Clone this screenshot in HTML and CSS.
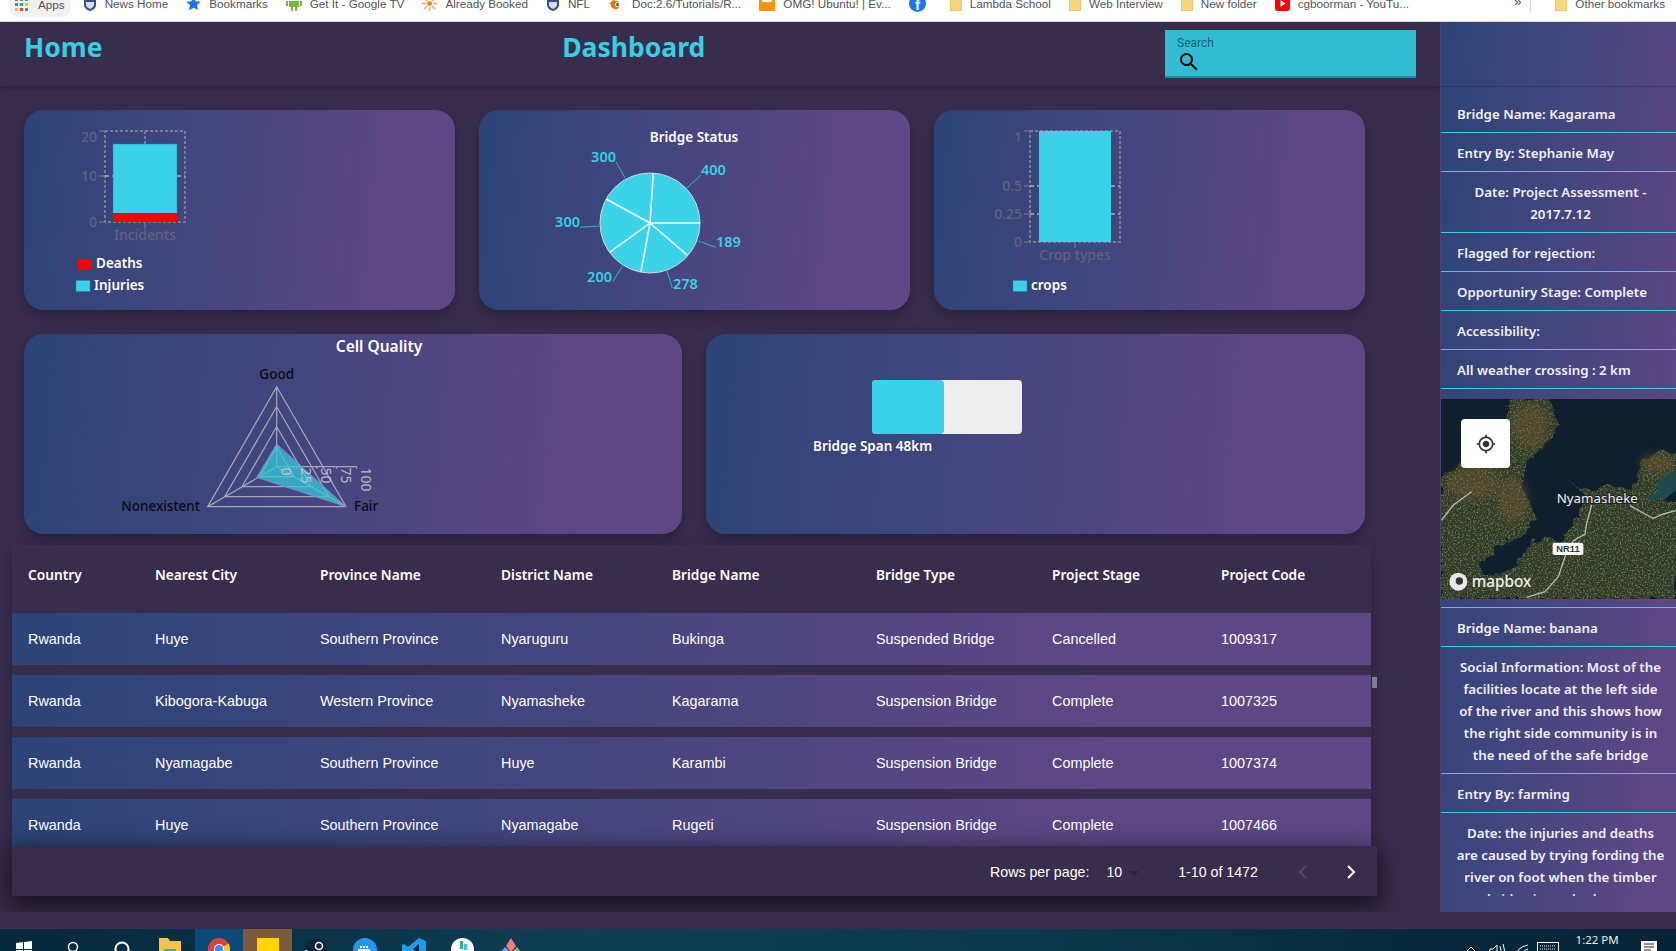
FILE: index.html
```html
<!DOCTYPE html>
<html lang="en">

<head>
  <meta charset="UTF-8">
  <meta name="viewport" content="width=device-width, initial-scale=1.0">
  <title>Dashboard</title>
  <link rel="stylesheet" href="styles.css">
</head>

<body>
  <svg class="defs" width="0" height="0">
    <symbol id="folder" viewBox="0 0 12 16">
      <path d="M0 0h7l5 3v13H0z" fill="#f6d77e" stroke="#e2b94f" stroke-width=".8" />
    </symbol>
    <symbol id="nfl" viewBox="0 0 14 16">
      <path d="M1 1h12v9q0 4-6 6-6-2-6-6z" fill="#3a4f86" />
      <path d="M3 7h8v3q0 2-4 4-4-2-4-4z" fill="#d9dde8" />
      <path d="M3 3h8v2H3z" fill="#e9e9ef" />
    </symbol>
  </svg>

  <nav class="bookmarks">
    <a class="bm apps">
      <svg width="13" height="13" viewBox="0 0 13 13">
        <rect width="3" height="3" fill="#ea4335" /><rect x="5" width="3" height="3" fill="#4285f4" /><rect x="10" width="3" height="3" fill="#34a853" />
        <rect y="5" width="3" height="3" fill="#4285f4" /><rect x="5" y="5" width="3" height="3" fill="#34a853" /><rect x="10" y="5" width="3" height="3" fill="#fbbc05" />
        <rect y="10" width="3" height="3" fill="#fbbc05" /><rect x="5" y="10" width="3" height="3" fill="#ea4335" /><rect x="10" y="10" width="3" height="3" fill="#4285f4" />
      </svg>
      Apps
    </a>
    <a class="bm"><svg width="14" height="16"><use href="#nfl" /></svg>News Home</a>
    <a class="bm"><svg width="15" height="15" viewBox="0 0 24 24"><path d="M12 1l3.4 7.4 8 .9-6 5.4 1.7 7.9L12 18.6 4.900 22.600l1.700-7.900-6-5.400 8-.9z" fill="#1a73e8" /></svg>Bookmarks</a>
    <a class="bm"><svg width="16" height="16" viewBox="0 0 16 16"><path d="M3 1h10v4H3zM3 6h10v6H3zM0 6h2v5H0zM14 6h2v5h-2zM5 12h2v4H5zM9 12h2v4H9z" fill="#7cb342" /></svg>Get It - Google TV</a>
    <a class="bm"><svg width="15" height="15" viewBox="0 0 15 15"><circle cx="7.500" cy="7.500" r="2.500" fill="#f08a24" /><path d="M7.500 0v4M7.500 11v4M0 7.500h4M11 7.500h4M2 2l3 3M10 10l3 3M13 2l-3 3M5 10l-3 3" stroke="#f7a85c" stroke-width="1.500" /></svg>Already Booked</a>
    <a class="bm"><svg width="14" height="16"><use href="#nfl" /></svg>NFL</a>
    <a class="bm"><svg width="16" height="14" viewBox="0 0 16 14"><path d="M1 8l6-6h3L6 5h4a4.500 4.500 0 1 1-7 3z" fill="#ea7600" /><circle cx="9.500" cy="8.500" r="2.500" fill="#fff" /><circle cx="9.500" cy="8.500" r="1.500" fill="#265787" /></svg>Doc:2.6/Tutorials/R...</a>
    <a class="bm"><svg width="16" height="16" viewBox="0 0 16 16"><rect width="16" height="16" fill="#f89406" /><rect x="3" y="3" width="10" height="4" fill="#fff" /></svg>OMG! Ubuntu! | Ev...</a>
    <a class="bm icon-only"><svg width="17" height="17" viewBox="0 0 17 17"><circle cx="8.500" cy="8.500" r="8.500" fill="#1877f2" /><text x="6" y="15" class="fb">f</text></svg></a>
    <a class="bm"><svg width="12" height="16"><use href="#folder" /></svg>Lambda School</a>
    <a class="bm"><svg width="12" height="16"><use href="#folder" /></svg>Web Interview</a>
    <a class="bm"><svg width="12" height="16"><use href="#folder" /></svg>New folder</a>
    <a class="bm"><svg width="15" height="15" viewBox="0 0 15 15"><rect width="15" height="15" rx="3" fill="#f00" /><path d="M5.500 4l5 3.500-5 3.500z" fill="#fff" /></svg>cgboorman - YouTu...</a>
    <span class="more">»</span>
    <a class="bm other"><svg width="12" height="16"><use href="#folder" /></svg>Other bookmarks</a>
  </nav>

  <div class="main">
    <div class="content">
      <header class="header">
        <h1>Home</h1>
        <h1>Dashboard</h1>
        <div class="search">
          <label>Search</label>
          <svg width="24" height="24" viewBox="0 0 24 24"><path d="M15.500 14h-.79l-.28-.27A6.470 6.470 0 0 0 16 9.500 6.500 6.500 0 1 0 9.500 16c1.610 0 3.090-.59 4.230-1.570l.27.28v.79l5 4.990L20.490 19l-4.990-5zm-6 0C7.010 14 5 11.990 5 9.500S7.010 5 9.500 5 14 7.010 14 9.500 11.990 14 9.500 14z" /></svg>
        </div>
      </header>

      <div class="charts">
        <div class="row">
          <section class="card">
            <svg class="chart" viewBox="24 110 431 200">
              <path class="frame" d="M105 131H185V222H105ZM145 131V144" />
              <path class="tick" d="M99 131h6M99 176h6M99 222h6M145 222v6" />
              <path class="grid" d="M105 176h8M177 176h8" />
              <rect class="bar" x="113" y="144" width="64" height="70" />
              <rect x="113" y="213" width="64" height="9" fill="#f00" />
              <text class="axis end" x="97" y="142">20</text>
              <text class="axis end" x="97" y="181">10</text>
              <text class="axis end" x="97" y="227">0</text>
              <text class="axis mid" x="145" y="240">Incidents</text>
              <rect x="78" y="259" width="14" height="10.500" fill="#f00" />
              <text class="legend" x="96" y="268">Deaths</text>
              <rect class="bar" x="76" y="280.500" width="14" height="11" />
              <text class="legend" x="94" y="290">Injuries</text>
            </svg>
          </section>

          <section class="card">
            <svg class="chart" viewBox="479 110 431 200">
              <text class="title mid" x="694" y="142">Bridge Status</text>
              <circle cx="650" cy="223" r="50" class="pie" />
              <path class="slice" d="M650 223L700 223M650 223L653.300 173.300M650 223L606 199M650 223L610 252M650 223L641 272M650 223L687.300 255.300" />
              <path class="leader" d="M686.700 188.300L701 175M625.300 178.300L616 161.700M599.300 226L580 227.300M622.700 265.700L612.700 281.700M666.700 270L672.300 288M697.700 240.700L715.700 247.300" />
              <text class="value" x="701" y="175">400</text>
              <text class="value end" x="616" y="162">300</text>
              <text class="value end" x="580" y="227">300</text>
              <text class="value end" x="612" y="282">200</text>
              <text class="value" x="673" y="289">278</text>
              <text class="value" x="716" y="247">189</text>
            </svg>
          </section>

          <section class="card">
            <svg class="chart" viewBox="934 110 431 200">
              <path class="frame" d="M1030 131H1120V242H1030Z" />
              <path class="tick" d="M1024 131h6M1024 186h6M1024 214h6M1024 242h6M1075 242v6" />
              <path class="grid" d="M1030 186h9M1111 186h9M1030 214h9M1111 214h9" />
              <rect class="bar plain" x="1039" y="131" width="72" height="111" />
              <text class="axis end" x="1022" y="142">1</text>
              <text class="axis end" x="1022" y="191">0.5</text>
              <text class="axis end" x="1022" y="219">0.25</text>
              <text class="axis end" x="1022" y="247">0</text>
              <text class="axis mid" x="1075" y="260">Crop types</text>
              <rect class="bar" x="1013" y="280.500" width="14" height="11" />
              <text class="legend" x="1031" y="290">crops</text>
            </svg>
          </section>
        </div>

        <div class="row">
          <section class="card radar-card">
            <svg class="chart" viewBox="24 334 658 200">
              <text class="title big mid" x="379" y="352">Cell Quality</text>
              <path class="web" d="M276.700 386.700L346 506.700H207.700ZM276.700 406.700L329 496.700H224.700ZM276.700 426.700L311.400 486.700H242ZM276.700 446.700L294 476.700H259.400ZM276.700 386.700V466.700M276.700 466.700L346 506.700M276.700 466.700L207.700 506.700" />
              <path class="web" d="M276.700 466.700H356.700M296.700 466.700v2M316.700 466.700v2M336.700 466.700v2M356.700 466.700v2" />
              <polygon class="radar" points="276.700,444 346,506.700 256.700,477.300" />
              <text class="tick-label" transform="translate(277 467.500) rotate(90)" y="-4">0</text>
              <text class="tick-label" transform="translate(297 467.500) rotate(90)" y="-4">25</text>
              <text class="tick-label" transform="translate(317 467.500) rotate(90)" y="-4">50</text>
              <text class="tick-label" transform="translate(337 467.500) rotate(90)" y="-4">75</text>
              <text class="tick-label" transform="translate(357 467.500) rotate(90)" y="-4">100</text>
              <text class="corner mid" x="276.700" y="379">Good</text>
              <text class="corner end" x="200" y="511">Nonexistent</text>
              <text class="corner" x="354" y="511">Fair</text>
            </svg>
          </section>

          <section class="card span-card">
            <div class="span-bar">
              <div class="span-fill"></div>
            </div>
            <p class="span-label">Bridge Span 48km</p>
          </section>
        </div>
      </div>

      <div class="table-box">
        <div class="table-scroll">
          <table>
            <thead>
              <tr>
                <th class="c1">Country</th>
                <th class="c2">Nearest City</th>
                <th class="c3">Province Name</th>
                <th class="c4">District Name</th>
                <th class="c5">Bridge Name</th>
                <th class="c6">Bridge Type</th>
                <th class="c7">Project Stage</th>
                <th>Project Code</th>
              </tr>
            </thead>
            <tbody>
              <tr>
                <td>Rwanda</td><td>Huye</td><td>Southern Province</td><td>Nyaruguru</td><td>Bukinga</td><td>Suspended Bridge</td><td>Cancelled</td><td>1009317</td>
              </tr>
              <tr>
                <td>Rwanda</td><td>Kibogora-Kabuga</td><td>Western Province</td><td>Nyamasheke</td><td>Kagarama</td><td>Suspension Bridge</td><td>Complete</td><td>1007325</td>
              </tr>
              <tr>
                <td>Rwanda</td><td>Nyamagabe</td><td>Southern Province</td><td>Huye</td><td>Karambi</td><td>Suspension Bridge</td><td>Complete</td><td>1007374</td>
              </tr>
              <tr>
                <td>Rwanda</td><td>Huye</td><td>Southern Province</td><td>Nyamagabe</td><td>Rugeti</td><td>Suspension Bridge</td><td>Complete</td><td>1007466</td>
              </tr>
            </tbody>
          </table>
        </div>
        <span class="scroll-thumb"></span>
        <div class="pagination">
          <span>Rows per page:</span>
          <span class="per-page">10</span>
          <span class="caret"></span>
          <span class="range">1-10 of 1472</span>
          <svg class="prev" width="10" height="14" viewBox="0 0 10 14"><path d="M8 1L2 7l6 6" /></svg>
          <svg class="next" width="10" height="14" viewBox="0 0 10 14"><path d="M2 1l6 6-6 6" /></svg>
        </div>
      </div>
    </div>

    <aside class="sidebar">
      <div class="sidebar-top"></div>
      <div class="sidebar-list">
        <div class="info">Bridge Name: Kagarama</div>
        <div class="info">Entry By: Stephanie May</div>
        <div class="info center">Date: Project Assessment - 2017.7.12</div>
        <div class="info">Flagged for rejection:</div>
        <div class="info">Opportuniry Stage: Complete</div>
        <div class="info">Accessibility:</div>
        <div class="info">All weather crossing : 2 km</div>
        <div class="map-item">
          <svg class="map" viewBox="33 27 705 600" preserveAspectRatio="none">
            <defs>
              <filter id="rough" x="-5%" y="-5%" width="110%" height="110%">
                <feTurbulence type="fractalNoise" baseFrequency=".035" numOctaves="4" seed="4" result="warp" />
                <feDisplacementMap in="SourceGraphic" in2="warp" scale="26" result="shape" />
                <feTurbulence type="fractalNoise" baseFrequency=".2" numOctaves="3" seed="9" />
                <feColorMatrix values="0 0 0 0 .3  0 0 0 0 .3  0 0 0 0 .17  1.800 0 0 0 -.9" result="grain" />
                <feComposite in="grain" in2="shape" operator="in" result="speck" />
                <feMerge>
                  <feMergeNode in="shape" />
                  <feMergeNode in="speck" />
                </feMerge>
              </filter>
              <filter id="soft"><feGaussianBlur stdDeviation="12" /></filter>
            </defs>
            <rect x="33" y="27" width="705" height="600" fill="#0f1f2d" />
            <path d="M640 300L738 210V300L660 365Z" fill="#1d4a50" />
            <g filter="url(#rough)">
              <path class="land" d="M33 260L70 235L110 215L190 170L230 80L235 27H360L385 100L370 135L290 220L275 290L300 340L318 380L290 430L200 470L150 520L165 560L240 540L300 470L340 435L390 460L440 380L470 320L405 260L440 290L490 300L540 285L600 300L640 215L690 180L738 190V240L690 270L660 330L738 330V627H33Z" />
            </g>
            <g filter="url(#soft)" class="patches">
              <ellipse cx="300" cy="110" rx="55" ry="70" />
              <ellipse cx="130" cy="280" rx="80" ry="50" />
              <ellipse cx="250" cy="330" rx="45" ry="70" />
              <ellipse cx="680" cy="220" rx="50" ry="30" />
            </g>
            <path class="road" d="M485 345L470 400L465 432L430 452L405 500L385 560L345 605L290 622M600 347L650 375L670 385L700 372L738 362M35 390L70 345L125 305" />
            <text class="place" x="380" y="340">Nyamasheke</text>
            <rect x="368" y="458" width="92" height="37" rx="6" fill="#fff" />
            <text class="shield" x="414" y="485">NR11</text>
            <circle cx="85" cy="575" r="27" fill="#e8e8e8" />
            <circle cx="88" cy="573" r="11" fill="#333" />
            <text class="wordmark" x="125" y="590">mapbox</text>
          </svg>
          <button class="locate">
            <svg width="20" height="20" viewBox="0 0 24 24"><path d="M12 8c-2.210 0-4 1.790-4 4s1.790 4 4 4 4-1.790 4-4-1.790-4-4-4zm8.940 3c-.46-4.170-3.770-7.480-7.940-7.940V1h-2v2.060C6.830 3.520 3.520 6.830 3.060 11H1v2h2.060c.46 4.170 3.770 7.480 7.940 7.940V23h2v-2.060c4.170-.46 7.480-3.770 7.940-7.940H23v-2h-2.060zM12 19c-3.870 0-7-3.130-7-7s3.130-7 7-7 7 3.130 7 7-3.130 7-7 7z" /></svg>
          </button>
        </div>
        <div class="info">Bridge Name: banana</div>
        <div class="info center">Social Information: Most of the facilities locate at the left side of the river and this shows how the right side community is in the need of the safe bridge</div>
        <div class="info">Entry By: farming</div>
        <div class="info center">Date: the injuries and deaths are caused by trying fording the river on foot when the timber bridge is washed away</div>
      </div>
    </aside>
  </div>

  <footer class="taskbar">
    <div class="slot"><svg width="16" height="16" viewBox="0 0 16 16"><path d="M0 2l7-1v7H0zM8 1l8-1v8H8zM0 9h7v6l-7-1zM8 9h8v7l-8-1z" fill="#fff" /></svg></div>
    <div class="slot"><svg width="12" height="16" viewBox="0 0 12 16"><circle cx="6" cy="6" r="4.500" fill="none" stroke="#fff" stroke-width="1.500" /></svg></div>
    <div class="slot"><svg width="16" height="16" viewBox="0 0 16 16"><circle cx="8" cy="8" r="6.500" fill="none" stroke="#fff" stroke-width="2" /></svg></div>
    <div class="slot"><svg width="22" height="20" viewBox="0 0 22 20"><path d="M0 0h9l2 3h11v17H0z" fill="#f4c542" /><rect x="5" y="11" width="12" height="4" fill="#3ba0e6" /></svg></div>
    <div class="slot tile-blue"><svg width="22" height="22" viewBox="0 0 22 22"><circle cx="11" cy="11" r="11" fill="#db4437" /><path d="M11 11L1.500 16.500A11 11 0 0 0 11 22z" fill="#0f9d58" /><path d="M11 11V22A11 11 0 0 0 20.500 5.500z" fill="#fbc02d" /><circle cx="11" cy="11" r="5" fill="#fff" /><circle cx="11" cy="11" r="4" fill="#4285f4" /></svg></div>
    <div class="slot tile-brown"><svg width="22" height="22" viewBox="0 0 22 22"><rect width="22" height="22" fill="#ffd400" /><rect x="10" y="17" width="12" height="5" fill="#3d3d3d" /></svg></div>
    <div class="slot"><svg width="22" height="22" viewBox="0 0 22 22"><circle cx="11" cy="11" r="11" fill="#10243e" /><circle cx="14" cy="8" r="3.500" fill="none" stroke="#fff" stroke-width="1.500" /><path d="M0 13l8 4" stroke="#fff" stroke-width="3" /></svg></div>
    <div class="slot"><svg width="24" height="22" viewBox="0 0 24 22"><circle cx="12" cy="12" r="12" fill="#2496ed" /><path d="M5 11h12v3H5z" fill="#fff" /><path d="M7 8h2v2H7zM10 8h2v2h-2zM13 8h2v2h-2z" fill="#fff" /></svg></div>
    <div class="slot"><svg width="24" height="22" viewBox="0 0 24 22"><path d="M17 0l7 3v18l-7 1L6 13l-4 3-2-1V7l2-1 4 3z" fill="#1f9cf0" /><path d="M17 6v10l-6-5z" fill="#0b2a3d" /></svg></div>
    <div class="slot"><svg width="23" height="22" viewBox="0 0 23 22"><circle cx="11.500" cy="11.500" r="11.500" fill="#fff" /><rect x="9" y="3" width="3" height="8" fill="#2eb67d" /><rect x="13" y="6" width="3" height="6" fill="#36c5f0" /><circle cx="15" cy="18" r="5" fill="#e01e5a" /><rect x="4" y="14" width="6" height="3" fill="#ecb22e" /></svg></div>
    <div class="slot"><svg width="24" height="22" viewBox="0 0 24 22"><path d="M12 0l5 8-5 6-5-6z" fill="#f47c7c" /><path d="M6 9l6 6-3 7H3l-3-6z" fill="#6ea8f7" /><path d="M18 9l6 7-3 6h-6l-3-7z" fill="#7cc05a" /></svg></div>
    <div class="tray">
      <svg class="tray-icon chevron" width="14" height="8" viewBox="0 0 14 8"><path d="M1 7l6-6 6 6" /></svg>
      <svg class="tray-icon speaker" width="16" height="14" viewBox="0 0 16 14"><path d="M1 6h3l4-4v12H4H1zM11 3q2 4 0 9M14 1q3 6 0 13" /></svg>
      <svg class="tray-icon wifi" width="14" height="14" viewBox="0 0 14 14"><path d="M1 14Q1 3 13 1M5 14Q5 8 13 5" /></svg>
      <svg class="tray-icon keyboard" width="22" height="14" viewBox="0 0 22 14"><rect x=".5" y=".5" width="21" height="13" /><path d="M3 4h16M3 7h16" stroke-dasharray="1 1" /></svg>
      <span class="clock">1:22 PM</span>
      <svg class="notify" width="16" height="14" viewBox="0 0 16 14"><rect width="16" height="14" fill="#fff" /><path d="M3 3h10M3 6h10M3 9h7" stroke="#222" /></svg>
    </div>
  </footer>
</body>

</html>
```

FILE: styles.css
```css
* {
  box-sizing: border-box;
}

html,
body {
  height: 951px;
  margin: 0;
  overflow: hidden;
}

body {
  background: #392d4e;
  font-family: "Noto Sans", Arial, sans-serif;
  color: #fff;
}

.defs {
  position: absolute;
}

/* browser bookmarks */
.bookmarks {
  display: flex;
  align-items: flex-start;
  gap: 18px;
  height: 22px;
  padding-left: 15px;
  background: #fff;
  border-bottom: 1px solid #d9d9dc;
  overflow: hidden;
  color: #50535a;
  font-family: "Liberation Sans", Arial, sans-serif;
  font-size: 11.700px;
}

.bm {
  display: flex;
  flex: none;
  align-items: center;
  gap: 8px;
  height: 16px;
  margin-top: -5px;
  white-space: nowrap;
}

.bm.apps {
  gap: 10px;
  height: 25px;
  margin: -8px -6px 0;
  padding: 0 6px;
  border-radius: 9px;
  background: #f1f1f1;
}

.bm.icon-only {
  margin-right: 6px;
}

.fb {
  fill: #fff;
  font-family: "Liberation Sans", sans-serif;
  font-size: 15px;
  font-weight: 700;
}

.more {
  margin: -6px 10px 0 auto;
  padding-right: 9px;
  border-right: 1px solid #d0d0d0;
  height: 18px;
  font-size: 13px;
}

.bm.other {
  margin-left: -4px;
  margin-right: 11px;
}

/* layout */
.main {
  display: flex;
  height: 890px;
  overflow: hidden;
}

.content {
  flex: 1;
  min-width: 0;
}

.header {
  display: flex;
  justify-content: space-between;
  height: 64px;
  padding: 8px 24px 0;
  background: #392d4e;
  box-shadow: 0 2px 6px rgba(0, 0, 0, .3);
}

.header h1 {
  margin: 0;
  color: #36cfe4;
  font-size: 26.500px;
  font-weight: 700;
  line-height: 34px;
}

.search {
  width: 251px;
  height: 48px;
  padding: 6px 12px;
  background: #32bcd1;
  border-bottom: 2px solid #1b8a9c;
}

.search label {
  display: block;
  color: rgba(0, 0, 0, .5);
  font-family: Roboto, sans-serif;
  font-size: 12px;
  line-height: 14px;
}

.search svg {
  display: block;
}

.charts {
  padding: 24px 75px 0 24px;
}

.row {
  display: flex;
  gap: 24px;
  margin-bottom: 24px;
}

.row:last-child {
  margin-bottom: 0;
}

.card {
  flex: 1 1 0;
  min-width: 0;
  height: 200px;
  border-radius: 20px;
  background: linear-gradient(95deg, #2c4478 0%, #5d4785 85%);
  box-shadow: 0 6px 14px rgba(0, 0, 0, .28);
  overflow: hidden;
}

.card.radar-card {
  flex: 0 0 658px;
}

.chart {
  display: block;
  width: 100%;
  height: 100%;
}

.frame {
  fill: none;
  stroke: #7d7a90;
  stroke-width: 2;
  stroke-dasharray: 3 2;
}

.tick {
  fill: none;
  stroke: #6e6b80;
  stroke-width: 1.500;
}

.grid {
  stroke: #ddd;
  stroke-dasharray: 4 3;
}

.bar {
  fill: #39d2e8;
  stroke: #2f7fb0;
  stroke-width: .5;
}

.bar.plain {
  stroke: none;
}

.end {
  text-anchor: end;
}

.mid {
  text-anchor: middle;
}

.axis {
  fill: #64617a;
  font-size: 14px;
  font-weight: 500;
}

.legend {
  fill: #fff;
  font-size: 13.500px;
  font-weight: 600;
}

.title {
  fill: #fff;
  font-size: 13.500px;
  font-weight: 600;
}

.title.big {
  font-size: 15.500px;
}

.pie {
  fill: #3ad3e8;
  stroke: #d5d5e0;
  stroke-width: 1;
}

.slice {
  fill: none;
  stroke: #fff;
  stroke-width: 1.500;
}

.leader {
  fill: none;
  stroke: #35b4cf;
  stroke-width: 1;
}

.value {
  fill: #39cfe6;
  font-size: 14.500px;
  font-weight: 600;
}

.web {
  fill: none;
  stroke: #a9a7b8;
  stroke-width: 1.200;
}

.radar {
  fill: #36c8d8;
  fill-opacity: .75;
  stroke: #8a7fd0;
}

.tick-label {
  fill: #d0d0d8;
  fill-opacity: .85;
  font-size: 14px;
}

.corner {
  fill: #0b0b14;
  font-size: 13.500px;
  font-weight: 500;
}

.span-card {
  padding-top: 46px;
}

.span-bar {
  width: 150px;
  height: 54px;
  margin-left: 166px;
  border-radius: 4px;
  background: #eee;
}

.span-fill {
  width: 72px;
  height: 100%;
  border-radius: 4px;
  background: #39d2e8;
}

.span-label {
  margin: 1px 0 0 107px;
  font-size: 13.500px;
  font-weight: 600;
  line-height: 22px;
}

/* table */
.table-box {
  position: relative;
  margin: 11px 69px 0 12px;
}

.table-scroll {
  height: 301px;
  background: #392d4e;
  overflow: hidden;
  box-shadow: 0 4px 14px rgba(0, 0, 0, .3);
}

table {
  width: 100%;
  margin-top: -10px;
  border-collapse: separate;
  border-spacing: 0 10px;
  table-layout: fixed;
}

th {
  height: 58px;
  padding: 1px 0 0 16px;
  font-size: 13.700px;
  font-weight: 600;
  text-align: left;
}

.c1 { width: 127px; }
.c2 { width: 165px; }
.c3 { width: 181px; }
.c4 { width: 171px; }
.c5 { width: 204px; }
.c6 { width: 176px; }
.c7 { width: 169px; }

tbody tr {
  background: linear-gradient(92deg, #2c4478 0%, #5d4785 80%);
}

td {
  height: 52px;
  padding: 0 0 0 16px;
  font-family: "Liberation Sans", Arial, sans-serif;
  font-size: 14.400px;
}

.scroll-thumb {
  position: absolute;
  top: 132px;
  right: -6px;
  width: 5px;
  height: 11px;
  background: #75808f;
}

.pagination {
  display: flex;
  align-items: center;
  height: 50px;
  margin-right: -6px;
  padding: 2px 0 0 978px;
  position: relative;
  background: #392d4e;
  font-family: "Liberation Sans", Arial, sans-serif;
  font-size: 14.200px;
  box-shadow: 0 8px 24px 4px rgba(0, 0, 0, .6);
}

.per-page {
  margin-left: 17px;
}

.caret {
  width: 0;
  height: 0;
  margin: 2px 0 0 7px;
  border: 5px solid transparent;
  border-top-color: #28223a;
  border-bottom: 0;
}

.range {
  margin-left: 39px;
}

.pagination svg {
  fill: none;
  stroke-width: 2;
}

.prev {
  margin-left: 40px;
  stroke: #4d4562;
}

.next {
  margin-left: 38px;
  stroke: #fff;
}

/* right panel */
.sidebar {
  flex: none;
  width: 236px;
  height: 890px;
  padding-bottom: 16px;
  background: linear-gradient(95deg, #2c4478 0%, #5d4785 90%);
  border-left: 1px solid #4a4370;
}

.sidebar-top {
  height: 65px;
  margin-bottom: 7px;
  border-bottom: 1px solid rgba(0, 0, 0, .2);
}

.sidebar-list {
  height: 802px;
  overflow: hidden;
}

.info {
  padding: 9px 16px 7px;
  border-bottom: 1px solid #35cfe6;
  color: #f0f0f8;
  font-size: 13.300px;
  font-weight: 600;
  line-height: 22px;
}

.info.center {
  padding-left: 15px;
  padding-right: 11px;
  text-align: center;
}

.map-item {
  position: relative;
  height: 219px;
  padding: 10px 0 8px;
  border-bottom: 1px solid #35cfe6;
}

.map {
  display: block;
  width: 100%;
  height: 200px;
}

.land {
  fill: #2e3b26;
}

.patches {
  fill: #7a5a36;
  opacity: .4;
}

.road {
  fill: none;
  stroke: #b9b9b0;
  stroke-width: 4;
}

.place {
  fill: #efefef;
  stroke: #1c2226;
  stroke-width: 6;
  paint-order: stroke;
  font-size: 40px;
}

.shield {
  fill: #333;
  font-family: "Liberation Sans", sans-serif;
  font-size: 28px;
  font-weight: 700;
  text-anchor: middle;
}

.wordmark {
  fill: #eee;
  font-size: 46px;
  font-weight: 500;
}

.locate {
  position: absolute;
  top: 30px;
  left: 20px;
  display: flex;
  align-items: center;
  justify-content: center;
  width: 49px;
  height: 49px;
  padding: 0;
  border: none;
  border-radius: 4px;
  background: #fff;
}

.locate svg {
  fill: #333;
}

/* windows taskbar */
.taskbar {
  display: flex;
  position: absolute;
  top: 929px;
  left: 0;
  width: 1676px;
  height: 22px;
  overflow: hidden;
  background: linear-gradient(90deg, #04283c 0%, #0f3e52 35%, #0c3a4c 60%, #07283c 85%, #052438 100%);
}

.slot {
  display: flex;
  flex: none;
  justify-content: center;
  width: 48.700px;
  padding-top: 12px;
}

.slot:nth-child(n+4) {
  padding-top: 9px;
}

.tile-blue {
  background: #0b4a78;
}

.tile-brown {
  background: #7d5a3c;
}

.tray {
  position: relative;
  flex: 1;
  display: flex;
  align-items: flex-start;
  padding: 0 0 0 928px;
}

.tray-icon {
  flex: none;
  fill: none;
  stroke: #fff;
  stroke-width: 1;
}

.chevron {
  margin: 17px 0 0 0;
}

.speaker {
  margin: 14px 0 0 11px;
}

.wifi {
  margin: 15px 0 0 10px;
}

.keyboard {
  margin: 13px 0 0 8px;
}

.clock {
  margin: 2px 0 0 17px;
  color: #eee;
  font-family: "Noto Sans", sans-serif;
  font-size: 11.500px;
  line-height: 18px;
  white-space: nowrap;
}

.notify {
  flex: none;
  margin: 12px 0 0 22px;
}
```
